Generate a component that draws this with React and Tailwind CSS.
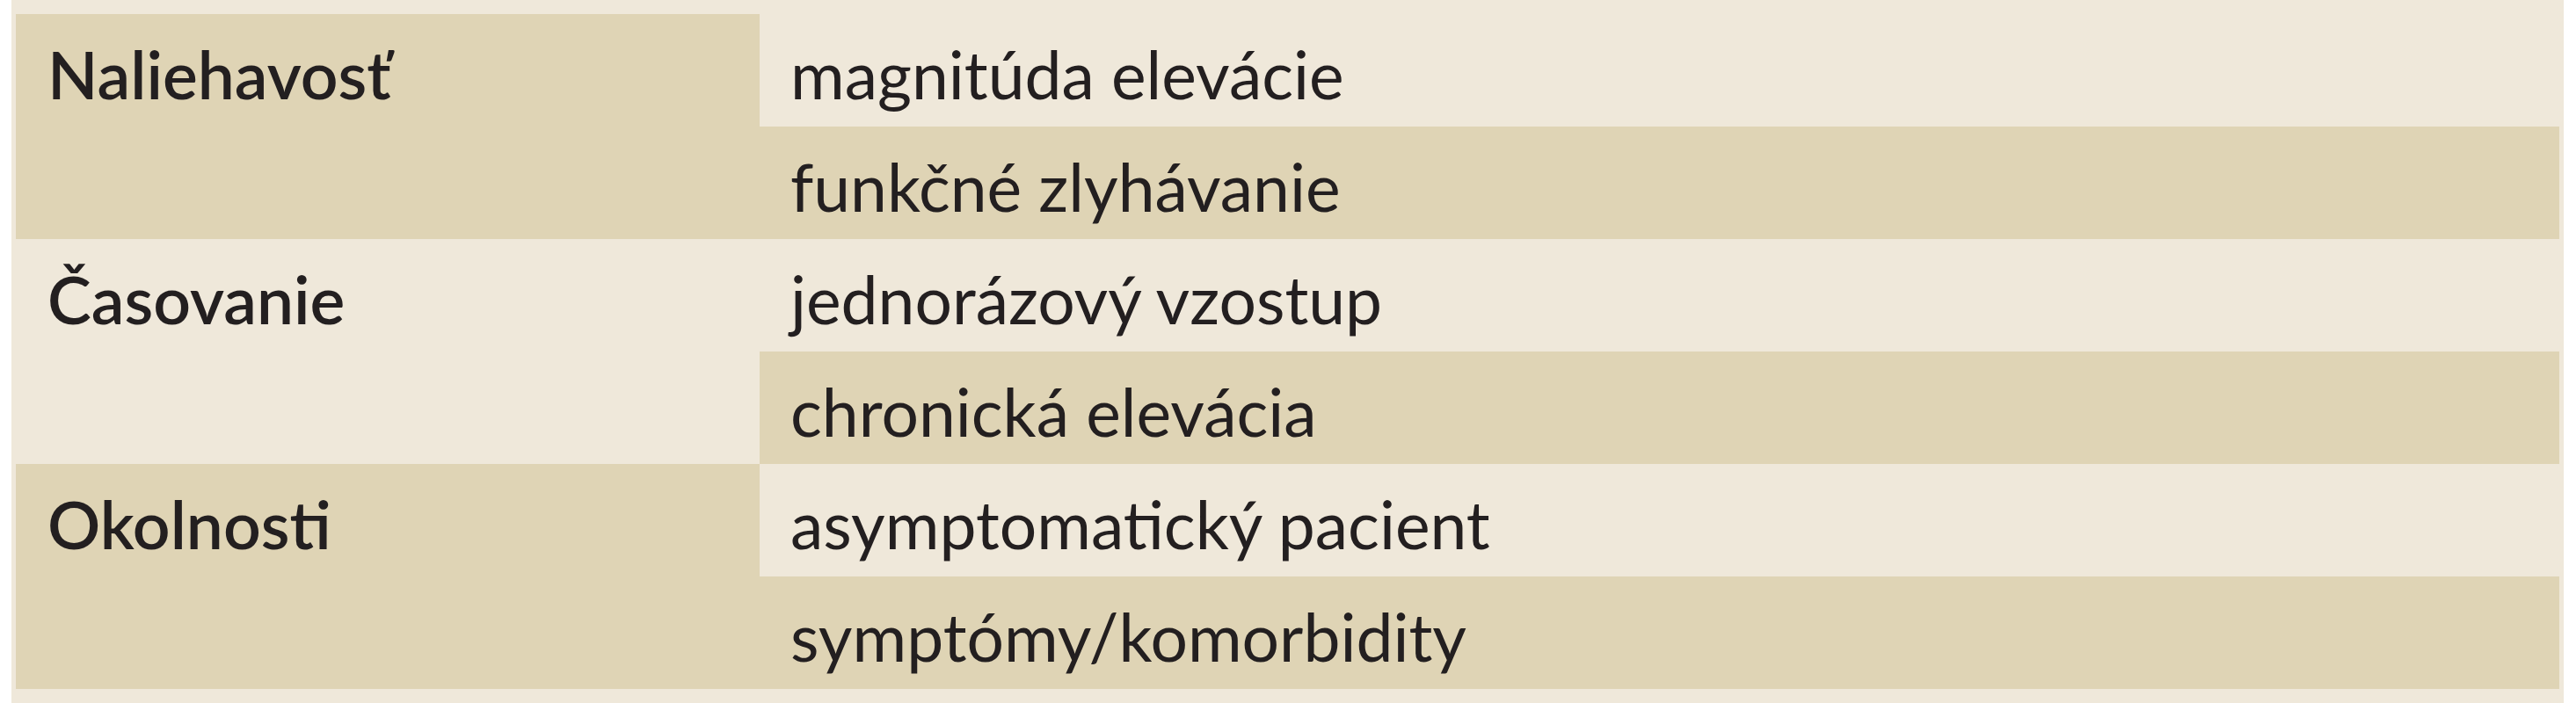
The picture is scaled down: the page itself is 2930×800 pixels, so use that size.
import React from "react";

const groups = [
  { label: "Naliehavosť", tan: true, items: ["magnitúda elevácie", "funkčné zlyhávanie"] },
  { label: "Časovanie", tan: false, items: ["jednorázový vzostup", "chronická elevácia"] },
  { label: "Okolnosti", tan: true, items: ["asymptomatický pacient", "symptómy/komorbidity"] },
];

export default function App() {
  return (
    <div className="w-[2930px] h-[800px] bg-white pl-[13px] pr-[14px]">
      <div
        className="h-full bg-[#efe8da] px-[5px] py-[16px] text-[#231f20] text-[75px]"
        style={{ fontFamily: "Lato, 'Open Sans', sans-serif" }}
      >
        <div className="flex flex-col">
          {groups.map((g) => (
            <div key={g.label} className="flex">
              <div
                className={
                  "w-[846px] shrink-0 pl-[36px] pt-[28px] font-semibold leading-[80px] " +
                  (g.tan ? "bg-[#dfd4b5]" : "bg-[#efe8da]")
                }
              >
                {g.label}
              </div>
              <div className="flex-1 flex flex-col">
                <div className="h-[128px] bg-[#efe8da] pl-[35px] pt-[28px] leading-[80px]">
                  {g.items[0]}
                </div>
                <div className="h-[128px] bg-[#dfd4b5] pl-[35px] pt-[28px] leading-[80px]">
                  {g.items[1]}
                </div>
              </div>
            </div>
          ))}
        </div>
      </div>
    </div>
  );
}
